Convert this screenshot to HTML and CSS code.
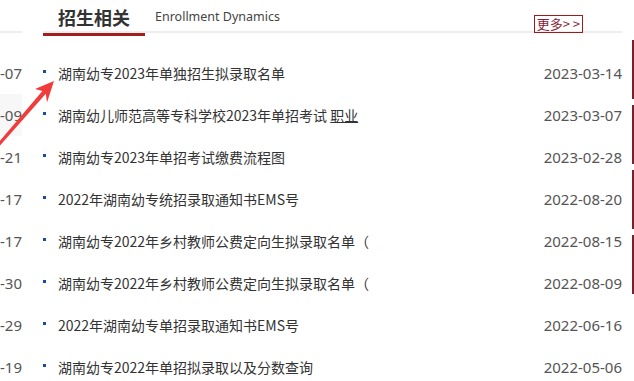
FILE: index.html
```html
<!DOCTYPE html>
<html lang="zh-CN">
<head>
    <meta charset="UTF-8">
    <meta name="viewport" content="width=device-width, initial-scale=1.0">
    <title>招生相关</title>
    <link rel="stylesheet" href="styles.css">
</head>
<body>
    <div class="page">
        <!-- neighbour column, mostly scrolled out of view -->
        <div class="col-left">
            <div class="col-head"></div>
            <ul class="side-list">
                <li>-07</li>
                <li class="hover">-09</li>
                <li>-21</li>
                <li>-17</li>
                <li>-17</li>
                <li>-30</li>
                <li>-29</li>
                <li>-19</li>
            </ul>
        </div>

        <div class="news">
            <div class="news-head">
                <h2 class="tab">招生相关</h2>
                <span class="en-title">Enrollment Dynamics</span>
                <a href="#" class="more">更多&gt; &gt;</a>
            </div>
            <ul class="news-list">
                <li><span class="dot"></span><a href="#">湖南幼专2023年单独招生拟录取名单</a><span class="date">2023-03-14</span></li>
                <li><span class="dot"></span><a href="#">湖南幼儿师范高等专科学校2023年单招考试 <u>职业</u></a><span class="date">2023-03-07</span></li>
                <li><span class="dot"></span><a href="#">湖南幼专2023年单招考试缴费流程图</a><span class="date">2023-02-28</span></li>
                <li><span class="dot"></span><a href="#">2022年湖南幼专统招录取通知书EMS号</a><span class="date">2022-08-20</span></li>
                <li><span class="dot"></span><a href="#">湖南幼专2022年乡村教师公费定向生拟录取名单（</a><span class="date">2022-08-15</span></li>
                <li><span class="dot"></span><a href="#">湖南幼专2022年乡村教师公费定向生拟录取名单（</a><span class="date">2022-08-09</span></li>
                <li><span class="dot"></span><a href="#">2022年湖南幼专单招录取通知书EMS号</a><span class="date">2022-06-16</span></li>
                <li><span class="dot"></span><a href="#">湖南幼专2022年单招拟录取以及分数查询</a><span class="date">2022-05-06</span></li>
            </ul>
        </div>

        <div class="col-right">
            <span></span>
            <span></span>
            <span></span>
            <span></span>
        </div>
    </div>

    <!-- annotation arrow drawn over the page -->
    <svg class="arrow" width="634" height="381" viewBox="0 0 634 381">
        <polygon points="54,81 47,102.5 45.8,93.7 -0.9,146.5 -3.1,144.5 42.4,90.9 35,89" fill="#f23b3b"/>
    </svg>
</body>
</html>
```

FILE: styles.css
```css
* {
    margin: 0;
    padding: 0;
    box-sizing: border-box;
}

body {
    width: 634px;
    height: 381px;
    overflow: hidden;
    background: #fff;
    position: relative;
    font-family: 'Noto Sans CJK SC', 'Noto Sans', sans-serif;
}

ul {
    list-style: none;
}

a {
    color: inherit;
    text-decoration: none;
}

.page {
    display: flex;
    height: 381px;
}

/* left neighbour column */
.col-left {
    width: 22px;
    flex-shrink: 0;
    overflow: hidden;
}

.col-head {
    height: 33px;
    border-bottom: 2px solid #eee;
}

.side-list {
    margin-top: 19px;
}

.side-list li {
    height: 42px;
    display: flex;
    align-items: center;
    justify-content: flex-end;
    font-family: 'Noto Sans', sans-serif;
    font-size: 15px;
    color: #555;
    white-space: nowrap;
}

.side-list li.hover {
    background: #f7f7f7;
}

/* main news block */
.news {
    width: 579px;
    margin-left: 21px;
    flex-shrink: 0;
}

.news-head {
    height: 33px;
    display: flex;
    align-items: flex-end;
    border-bottom: 2px solid #eee;
}

.tab {
    width: 102px;
    height: 34px;
    margin-bottom: -5px;
    padding: 3px 0 0 15px;
    border-bottom: 3px solid #a11f1f;
    font-size: 18px;
    line-height: 24px;
    font-weight: bold;
    color: #333;
}

.en-title {
    margin-left: 10px;
    padding-bottom: 6px;
    font-family: 'Noto Sans', sans-serif;
    font-size: 12.5px;
    line-height: 16px;
    color: #444;
}

.more {
    margin-left: auto;
    margin-right: 39px;
    margin-bottom: -2px;
    height: 18px;
    padding: 0 2px;
    border: 1px solid #9b1c1c;
    font-size: 13px;
    line-height: 16px;
    color: #8a1f3a;
    white-space: nowrap;
}

.news-list {
    margin-top: 19px;
}

.news-list li {
    height: 42px;
    display: flex;
    align-items: center;
    font-size: 14px;
    color: #333;
    white-space: nowrap;
}

.dot {
    width: 3px;
    height: 3px;
    margin: -3px 12px 0 0;
    background: #1a4d99;
    flex-shrink: 0;
}

.news-list .date {
    margin-left: auto;
    font-family: 'Noto Sans', sans-serif;
    font-size: 15px;
    color: #555;
}

/* right neighbour column edge */
.col-right {
    margin-left: 10px;
    padding-top: 40px;
    display: flex;
    flex-direction: column;
    gap: 6px;
}

.col-right span {
    display: block;
    width: 2px;
    height: 59px;
    background: #7b1f2a;
}

.arrow {
    position: absolute;
    left: 0;
    top: 0;
    pointer-events: none;
}
```
